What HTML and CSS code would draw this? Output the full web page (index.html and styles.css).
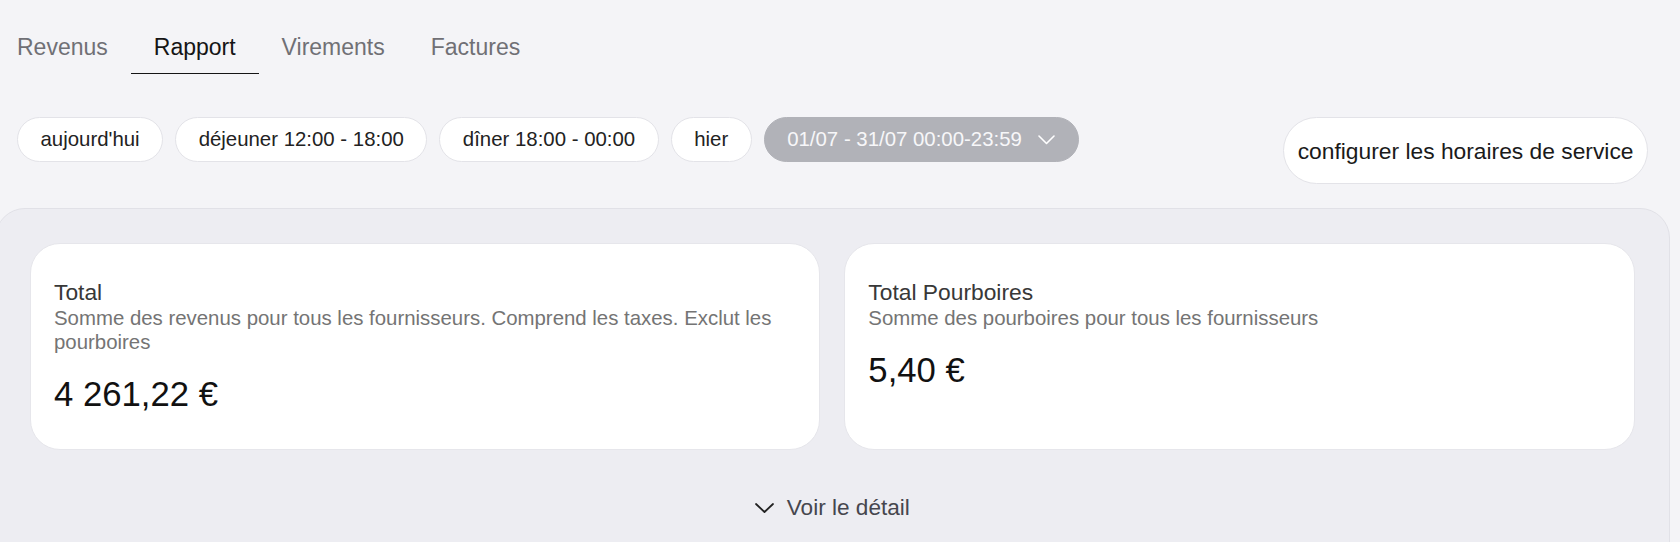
FILE: index.html
```html
<!DOCTYPE html>
<html lang="fr">
<head>
<meta charset="utf-8">
<title>Rapport</title>
<link rel="stylesheet" href="styles.css">
</head>
<body>
<div class="page">
  <nav class="tabs">
    <span class="tab">Revenus</span>
    <span class="tab tab-active">Rapport</span>
    <span class="tab">Virements</span>
    <span class="tab">Factures</span>
  </nav>

  <div class="filters">
    <div class="chips">
      <span class="chip">aujourd'hui</span>
      <span class="chip">déjeuner 12:00 - 18:00</span>
      <span class="chip">dîner 18:00 - 00:00</span>
      <span class="chip">hier</span>
      <span class="chip chip-selected">01/07 - 31/07 00:00-23:59
        <svg class="chip-chevron" width="17" height="10" viewBox="0 0 17 10"><polyline points="1,1 8.5,8.5 16,1" fill="none" stroke="#ffffff" stroke-width="1.6" stroke-linecap="round" stroke-linejoin="round"/></svg>
      </span>
    </div>
    <span class="config">configurer les horaires de service</span>
  </div>

  <section class="panel">
    <div class="cards">
      <div class="card">
        <div class="card-title">Total</div>
        <div class="card-desc">Somme des revenus pour tous les fournisseurs. Comprend les taxes. Exclut les pourboires</div>
        <div class="card-amount">4 261,22 €</div>
      </div>
      <div class="card">
        <div class="card-title">Total Pourboires</div>
        <div class="card-desc">Somme des pourboires pour tous les fournisseurs</div>
        <div class="card-amount">5,40 €</div>
      </div>
    </div>
    <div class="details">
      <svg width="19" height="10" viewBox="0 0 19 10"><polyline points="1,1 9.5,9 18,1" fill="none" stroke="#222222" stroke-width="1.8" stroke-linecap="round" stroke-linejoin="round"/></svg>
      <span>Voir le détail</span>
    </div>
  </section>
</div>
</body>
</html>
```

FILE: styles.css
```css
* {
  box-sizing: border-box;
}

html, body {
  margin: 0;
  padding: 0;
  height: 100%;
  overflow: hidden;
}

body {
  background: #f4f4f7;
  font-family: "Liberation Sans", Arial, sans-serif;
  color: #1a1a1a;
}

.page {
  padding: 0 32px 0 17px;
}

.tabs {
  display: flex;
  margin-top: 34px;
}

.tab {
  font-size: 23px;
  line-height: 27px;
  padding: 0 23px 12px;
  color: #707075;
  border-bottom: 1px solid transparent;
}

.tab:first-child {
  padding-left: 0;
}

.tab-active {
  color: #151515;
  border-bottom-color: #151515;
}

.filters {
  display: flex;
  justify-content: space-between;
  align-items: flex-start;
  margin-top: 43px;
}

.chips {
  display: flex;
  gap: 12px;
}

.chip {
  display: inline-flex;
  align-items: center;
  font-size: 20.4px;
  line-height: 23px;
  padding: 10px 22.5px;
  border: 1px solid #e3e3e8;
  border-radius: 30px;
  background: #ffffff;
  color: #222222;
  white-space: nowrap;
}

.chip-selected {
  background: #b1b2b8;
  border-color: #b1b2b8;
  color: #f7f7f9;
  gap: 16px;
  padding-right: 23.5px;
}

.chip-chevron {
  display: block;
}

.config {
  font-size: 22.8px;
  line-height: 26px;
  padding: 19.6px 13.5px;
  border: 1px solid #e3e3e8;
  border-radius: 40px;
  background: #ffffff;
  color: #1a1a1a;
  white-space: nowrap;
}

.panel {
  margin: 24px -21.7px 0 -22px;
  border: 1px solid #e1e1e7;
  border-radius: 30px;
  background: #ededf2;
  padding: 34px 34px 60px;
}

.cards {
  display: grid;
  grid-template-columns: 1fr 1fr;
  gap: 24px;
}

.card {
  background: #ffffff;
  border: 1px solid #e6e6eb;
  border-radius: 30px;
  padding: 34px 23px 35.5px;
}

.card-title {
  font-size: 22.8px;
  line-height: 28px;
  color: #383838;
}

.card-desc {
  font-size: 20.4px;
  line-height: 24px;
  color: #747474;
}

.card-amount {
  font-size: 34.7px;
  line-height: 40px;
  margin-top: 19.5px;
  color: #111111;
}

.details {
  display: flex;
  justify-content: center;
  align-items: center;
  gap: 13px;
  margin-top: 44.8px;
  font-size: 22.6px;
  line-height: 26px;
  color: #46464e;
}

.details svg {
  display: block;
}
```
